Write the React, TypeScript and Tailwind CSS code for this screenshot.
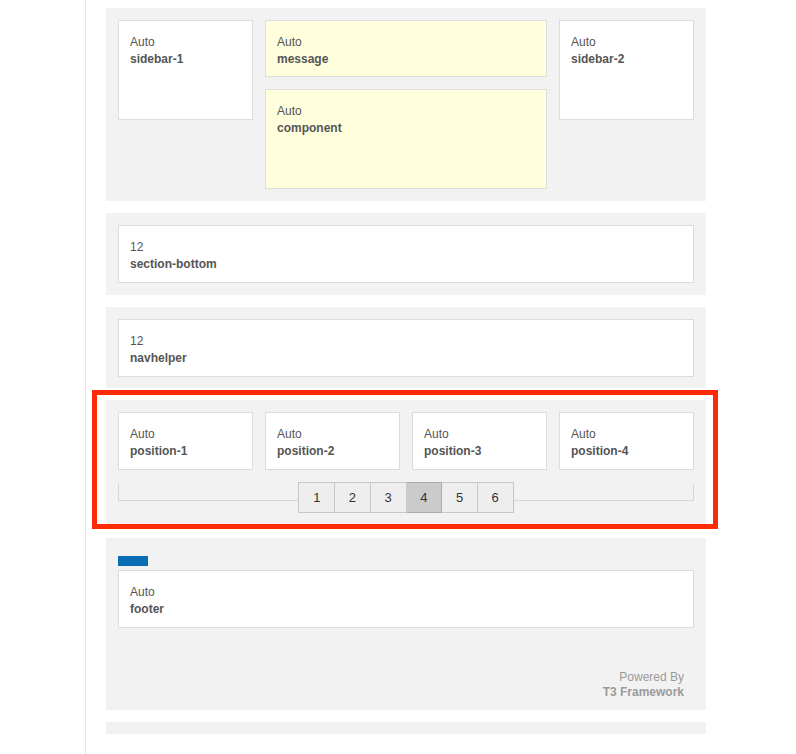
import React from "react";

const font = { fontFamily: '"Liberation Sans", Arial, Helvetica, sans-serif' };

function Card({ top, name, yellow = false, tall = false }: { top: string; name: string; yellow?: boolean; tall?: boolean }) {
  return (
    <div
      className={`border border-[#dcdcdc] ${yellow ? "bg-[#ffffde]" : "bg-white"} ${tall ? "h-[100px]" : "h-[58px]"} pl-[11px] pt-[13px] text-[12px] leading-[17px] text-[#555]`}
    >
      <div>{top}</div>
      <div className="font-bold">{name}</div>
    </div>
  );
}

export default function App() {
  const pages = [1, 2, 3, 4, 5, 6];
  return (
    <div className="min-h-screen bg-white" style={font}>
      <div className="ml-[85px] min-h-screen border-l border-[#e6e6e6] pl-[20px] pt-[8px]">
        <div className="flex w-[600px] flex-col gap-[12px]">
          {/* section 1 */}
          <div className="bg-[#f2f2f2] p-[12px]">
            <div className="grid grid-cols-4 items-start gap-x-[12px]">
              <Card top="Auto" name="sidebar-1" tall />
              <div className="col-span-2 flex flex-col gap-[12px]">
                <div className="border border-[#dcdcdc] bg-[#ffffde] h-[57px] pl-[11px] pt-[13px] text-[12px] leading-[17px] text-[#555]">
                  <div>Auto</div>
                  <div className="font-bold">message</div>
                </div>
                <Card top="Auto" name="component" yellow tall />
              </div>
              <Card top="Auto" name="sidebar-2" tall />
            </div>
          </div>

          {/* section 2 */}
          <div className="bg-[#f2f2f2] p-[12px]">
            <Card top="12" name="section-bottom" />
          </div>

          {/* section 3 */}
          <div className="bg-[#f2f2f2] px-[12px] pt-[12px] pb-[11px]">
            <Card top="12" name="navhelper" />
          </div>

          {/* section 4 */}
          <div className="relative bg-[#f2f2f2] px-[12px] pt-[12px] pb-[13px]">
            <div className="grid grid-cols-4 gap-x-[12px]">
              <Card top="Auto" name="position-1" />
              <Card top="Auto" name="position-2" />
              <Card top="Auto" name="position-3" />
              <Card top="Auto" name="position-4" />
            </div>
            <div className="mt-[12px] flex items-start">
              <div className="mt-[2px] h-[17px] flex-1 border-b border-l border-[#d6d6d6]" />
              <div className="flex border-l border-[#c8c8c8]">
                {pages.map((p) => (
                  <div
                    key={p}
                    className={`flex h-[31px] w-[35.7px] items-center justify-center border-y border-r text-[13px] text-[#333] ${
                      p === 4 ? "bg-[#cbcbcb] border-[#acacac]" : "bg-[#eeeeee] border-[#c8c8c8]"
                    }`}
                  >
                    {p}
                  </div>
                ))}
              </div>
              <div className="mt-[2px] h-[17px] flex-1 border-b border-r border-[#d6d6d6]" />
            </div>
            <div className="pointer-events-none absolute -left-[14px] -top-[10px] h-[139px] w-[626px] border-[5px] border-[#fd2b08]" />
          </div>

          {/* section 5 */}
          <div className="bg-[#f2f2f2] px-[12px] pt-[18px] pb-[10px]">
            <div className="h-[10px] w-[30px] bg-[#0b6db6]" />
            <div className="mt-[4px]">
              <Card top="Auto" name="footer" />
            </div>
            <div className="mt-[42px] pr-[10px] text-right text-[12px] leading-[15px] text-[#9a9a9a]">
              <div>Powered By</div>
              <div className="font-bold">T3 Framework</div>
            </div>
          </div>

          {/* section 6 */}
          <div className="h-[12px] bg-[#f2f2f2]" />
        </div>
      </div>
    </div>
  );
}
